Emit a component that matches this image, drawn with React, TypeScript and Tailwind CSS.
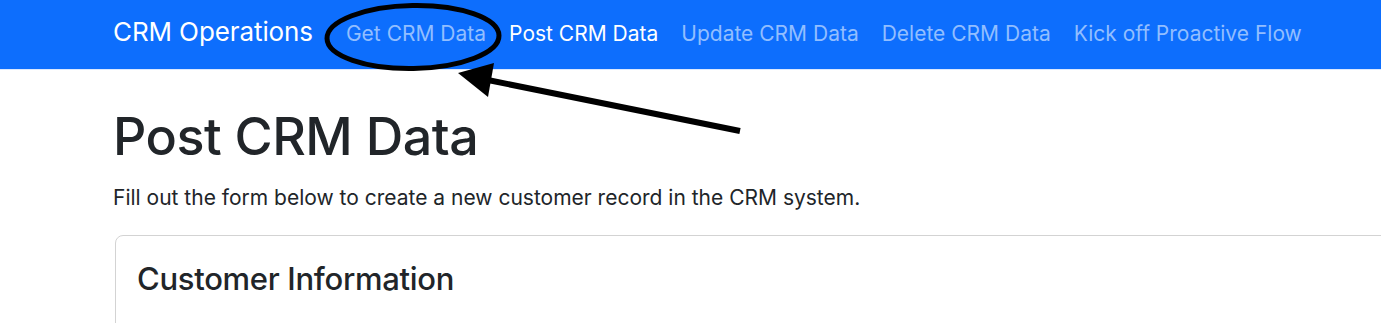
import React from "react";

const links = [
  { label: "Get CRM Data", active: false },
  { label: "Post CRM Data", active: true },
  { label: "Update CRM Data", active: false },
  { label: "Delete CRM Data", active: false },
  { label: "Kick off Proactive Flow", active: false },
];

export default function App() {
  return (
    <div
      className="relative w-[1381px] h-[323px] overflow-hidden bg-white"
      style={{ fontFamily: "Inter, 'Liberation Sans', sans-serif" }}
    >
      <nav className="h-[70px] bg-[#0d6efd] border-b border-[#dbe8ff] pl-[113px] pt-[14px] flex items-baseline">
        <span className="text-[26px] leading-[36px] text-white tracking-[-0.1px]">CRM Operations</span>
        <ul className="flex items-baseline gap-[23px] ml-[33px]">
          {links.map((l) => (
            <li
              key={l.label}
              className={
                "text-[21px] leading-[30px] " +
                (l.active ? "text-white" : "text-[#92beff]")
              }
            >
              {l.label}
            </li>
          ))}
        </ul>
      </nav>

      <main className="pl-[113px] pt-[36px]">
        <h1 className="text-[52px] leading-[1.2] text-[#212529] font-medium tracking-[-0.5px]">Post CRM Data</h1>
        <p className="mt-[15px] text-[21px] leading-[30px] text-[#212529]">
          Fill out the form below to create a new customer record in the CRM system.
        </p>
        <div className="mt-[22px] ml-[2px] w-[1300px] h-[200px] rounded-[8px] border border-[#d3d3d3] pt-[24px] pl-[21px]">
          <h4 className="text-[31px] leading-[1.2] text-[#212529] font-medium tracking-[-0.3px]">Customer Information</h4>
        </div>
      </main>

      <svg
        className="absolute left-0 top-0 pointer-events-none"
        width="1381"
        height="323"
        viewBox="0 0 1381 323"
      >
        <ellipse cx="413" cy="37" rx="86" ry="31.5" fill="none" stroke="#000" strokeWidth="5" transform="rotate(-1 413 37)" />
        <line x1="740" y1="131" x2="478" y2="78" stroke="#000" strokeWidth="6" />
        <polygon points="458,73 494,63 488,97" fill="#000" />
      </svg>
    </div>
  );
}
